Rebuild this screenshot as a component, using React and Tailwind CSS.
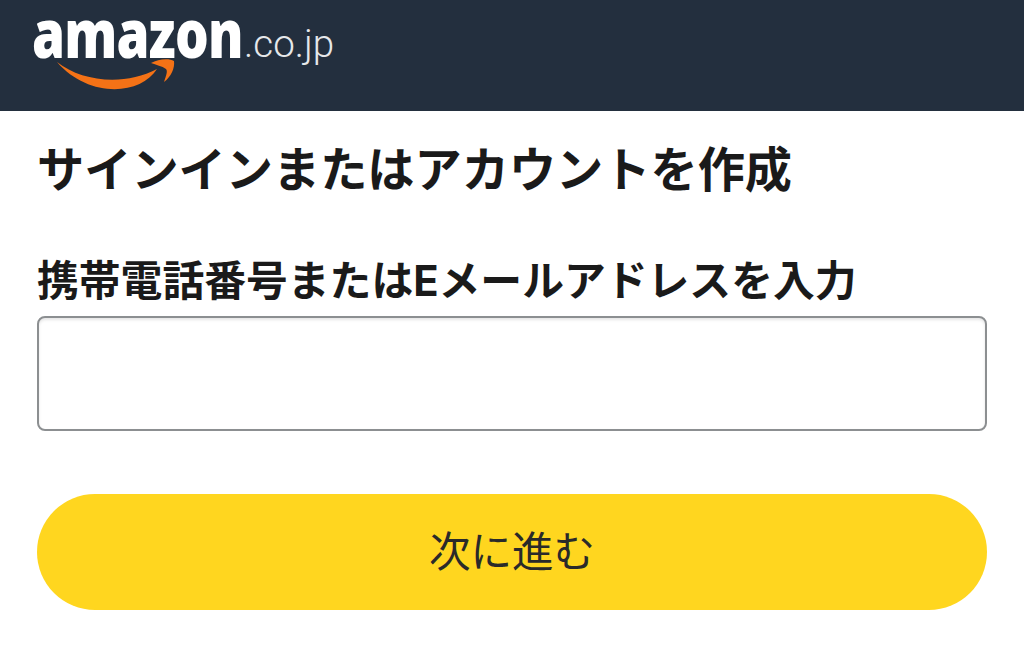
const cjk = "font-['Inter','Noto_Sans_CJK_JP',sans-serif]";

function Logo() {
  return (
    <div className="relative flex h-[111px] items-start pl-[32px]">
      <span className="mr-[-58px] inline-block origin-left scale-x-[0.78] whitespace-nowrap text-[68px] font-extrabold leading-[64px] tracking-[-1px] text-white font-['Open_Sans',sans-serif]">amazon</span>
      <span className="mt-[20px] text-[38.5px] font-light leading-[48px] text-[#e6e8ea] font-['Roboto',sans-serif]">.co.jp</span>
      <svg className="absolute left-0 top-0" width="200" height="111" viewBox="0 0 200 111">
        <path d="M57 62 C82 82 125 86 157 69 C140 96 88 98 57 62 Z" fill="#f47216" />
        <path d="M151 63 C158 59 169 58 174 61 C175 68 171 77 164 82 C166 76 168 71 166 69 C162 66 156 65 151 63 Z" fill="#f47216" />
      </svg>
    </div>
  );
}

export default function App() {
  return (
    <div className={`h-[649px] w-[1024px] overflow-hidden bg-white ${cjk}`}>
      <header className="h-[111px] bg-[#232f3e]">
        <Logo />
      </header>
      <main className="px-[37px]">
        <h1 className="mt-[32px] text-[47.2px] font-bold leading-[54px] text-[#1a1a1a]">サインインまたはアカウントを作成</h1>
        <label className="mt-[59px] block text-[41.8px] font-bold leading-[50px] text-[#1a1a1a]">携帯電話番号またはEメールアドレスを入力</label>
        <input className="mt-[10px] block h-[115px] w-[950px] rounded-[8px] border-[2.5px] border-[#8c8f91] bg-white shadow-[inset_0_2px_3px_rgba(0,0,0,0.1)]" />
        <button className="mt-[63px] flex h-[116px] w-[950px] items-center justify-center rounded-[58px] bg-[#ffd61f] text-[41.5px] text-[#2a2a2a]">次に進む</button>
      </main>
    </div>
  );
}
